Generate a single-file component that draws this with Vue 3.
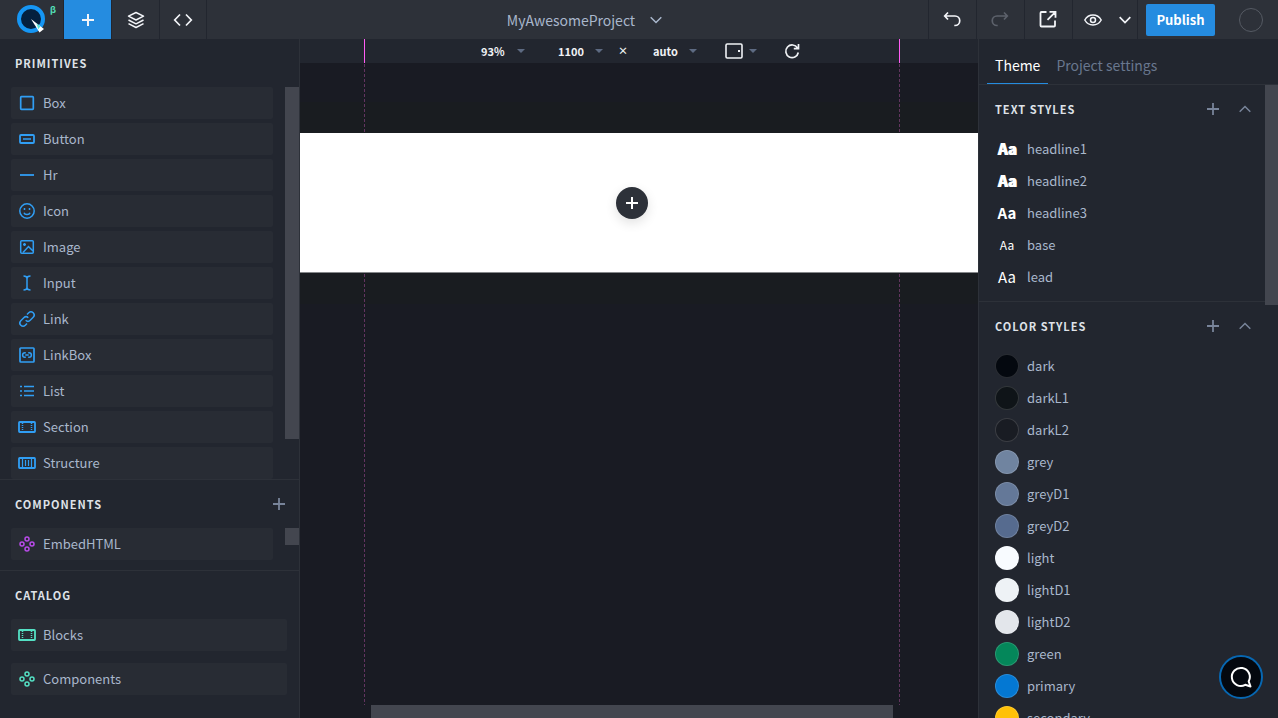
<script setup>
const primitives = [
  { name: 'Box', icon: 'box' },
  { name: 'Button', icon: 'button' },
  { name: 'Hr', icon: 'hr' },
  { name: 'Icon', icon: 'smile' },
  { name: 'Image', icon: 'image' },
  { name: 'Input', icon: 'input' },
  { name: 'Link', icon: 'link' },
  { name: 'LinkBox', icon: 'linkbox' },
  { name: 'List', icon: 'list' },
  { name: 'Section', icon: 'section' },
  { name: 'Structure', icon: 'structure' },
]

const catalog = [
  { name: 'Blocks', icon: 'section' },
  { name: 'Components', icon: 'component' },
]

const icons = {
  box: '<rect x="1.700" y="1.700" width="12.600" height="12.600" rx="0.7" stroke-width="1.700"/>',
  button: '<rect x="1" y="4" width="14" height="8" rx="1" stroke-width="1.800"/><path d="M4 8h8"/>',
  hr: '<path d="M1 8h14" stroke-width="1.800"/>',
  smile: '<circle cx="8" cy="8" r="7.2"/><path d="M5 9.8c.7 2.4 5.300 2.400 6 0M5.500 5v2M10.500 5v2"/>',
  image: '<rect x="1.700" y="1.700" width="12.600" height="12.600" rx="1"/><path d="M4 13.500l5.500-6 4.500 4.500M5.500 4v3M4 5.500h3"/>',
  input: '<path d="M8 3v10M4.500 1c2 0 3.500.7 3.500 2.500C8 1.700 9.500 1 11.500 1M4.500 15c2 0 3.500-.7 3.500-2.500 0 1.800 1.500 2.500 3.500 2.500"/>',
  link: '<path d="M6.700 9.300a3.200 3.200 0 0 0 4.500 0l3-3a3.180 3.180 0 0 0-4.500-4.500L8 3.500M9.300 6.700a3.200 3.200 0 0 0-4.500 0l-3 3a3.180 3.180 0 0 0 4.500 4.500L8 12.500"/>',
  linkbox: '<rect x="1" y="1" width="14" height="14" rx="0.8" stroke-width="1.700"/><path d="M6.800 5.700H5.900a2.300 2.300 0 0 0 0 4.600h.9M9.200 5.700h.9a2.300 2.300 0 0 1 0 4.600h-.9M6.300 8h3.400"/>',
  list: '<path d="M5 3.500h10M5 8h10M5 12.500h10M1 3.500h2M1 8h2M1 12.500h2" stroke-width="1.300"/>',
  section: '<rect x="0" y="3" width="16" height="10" rx="0.7" stroke-width="1.800"/><path d="M3.500 4v8M12.500 4v8" stroke-dasharray="1 1"/>',
  structure: '<rect x="0" y="3" width="16" height="10" rx="0.7" stroke-width="1.800"/><path d="M3.500 4v8M6.500 5v6M9.500 5v6M12.500 4v8" stroke-width="1.200"/>',
  component: '<circle cx="8" cy="3" r="2"/><circle cx="8" cy="13" r="2"/><circle cx="3" cy="8" r="2"/><circle cx="13" cy="8" r="2"/>',
}

const textStyles = [
  { name: 'headline1', cls: 'black' },
  { name: 'headline2', cls: 'black' },
  { name: 'headline3', cls: 'bold' },
  { name: 'base', cls: 'small' },
  { name: 'lead', cls: 'lead' },
]

const colors = [
  { name: 'dark', value: '#04080f' },
  { name: 'darkL1', value: '#0f1418' },
  { name: 'darkL2', value: '#191c23' },
  { name: 'grey', value: '#7084a0' },
  { name: 'greyD1', value: '#647898' },
  { name: 'greyD2', value: '#566b8f' },
  { name: 'light', value: '#f8fbff' },
  { name: 'lightD1', value: '#eef2f6' },
  { name: 'lightD2', value: '#e3e6eb' },
  { name: 'green', value: '#04875a' },
  { name: 'primary', value: '#0478d3' },
  { name: 'secondary', value: '#ffc107' },
]
</script>

<template>
  <div class="app">
    <header class="topbar">
      <a class="logo" href="#" aria-label="Home">
        <svg width="28" height="28" viewBox="0 0 28 28">
          <circle cx="14" cy="14" r="12" fill="#04203f" stroke="#1696f4" stroke-width="4" />
          <path d="M14 14L27 24l-4.500 3.500z" fill="#fff" />
          <path d="M19.500 18.500l4 2.800-2.200 3z" fill="#5ce6dc" />
        </svg>
        <span class="beta">β</span>
      </a>
      <button class="tool active" aria-label="Add">
        <svg width="24" height="24" viewBox="0 0 24 24"><path d="M12 6v12M6 12h12" stroke-width="2" /></svg>
      </button>
      <button class="tool" aria-label="Layers">
        <svg width="24" height="24" viewBox="0 0 24 24"><path d="M12 4.500l7.500 3.700-7.500 3.800-7.500-3.800zM4.500 12l7.500 3.800 7.500-3.800M4.500 15.700l7.500 3.800 7.500-3.800" stroke-linejoin="round" /></svg>
      </button>
      <button class="tool narrow" aria-label="Code">
        <svg width="24" height="24" viewBox="0 0 24 24"><path d="M9 6.500L3.700 12 9 17.500M15 6.500l5.300 5.500-5.300 5.500" stroke-width="1.700" /></svg>
      </button>
      <div class="project">
        <button class="project-name">
          MyAwesomeProject
          <svg width="12" height="12" viewBox="0 0 12 12"><path d="M.7 3.200L6 8.500l5.300-5.300" /></svg>
        </button>
      </div>
      <button class="tool edge" aria-label="Undo">
        <svg width="24" height="24" viewBox="1 0 24 24"><path d="M8 4.500L4.700 8 8 11.500M4.700 8H15a4.700 4.700 0 0 1 0 9.500h-.7" stroke-width="1.700" /></svg>
      </button>
      <button class="tool dim" aria-label="Redo">
        <svg width="24" height="24" viewBox="1 0 24 24"><path d="M16 4.500L19.300 8 16 11.500M19.300 8H9a4.700 4.700 0 0 0 0 9.500h.7" stroke-width="1.700" /></svg>
      </button>
      <button class="tool" aria-label="Open">
        <svg width="24" height="24" viewBox="1 1 24 24"><path d="M10.500 5H5.500a1 1 0 0 0-1 1v12.500a1 1 0 0 0 1 1H18a1 1 0 0 0 1-1V13.500M13.500 4.800h6v6M19.500 4.800l-8 8" stroke-width="1.800" /></svg>
      </button>
      <div class="preview">
        <button class="plain" aria-label="Preview">
          <svg width="18" height="18" viewBox="0 0 18 18"><path d="M.8 9C4.500 2.300 13.500 2.300 17.200 9 13.500 15.700 4.500 15.700.8 9z" /><circle cx="9" cy="9" r="2.500" /></svg>
        </button>
        <button class="plain" aria-label="Preview options">
          <svg width="12" height="12" viewBox="0 0 12 12"><path d="M.7 3.200L6 8.500l5.300-5.300" stroke-width="1.700" /></svg>
        </button>
      </div>
      <button class="publish">Publish</button>
      <button class="avatar" aria-label="Account"></button>
    </header>

    <div class="body">
      <aside class="left">
        <section class="primitives">
          <h2 class="head">Primitives</h2>
          <div class="scroller">
            <ul class="items">
              <li v-for="p in primitives" :key="p.name">
                <button class="item">
                  <svg width="16" height="16" viewBox="0 0 16 16" class="blue" v-html="icons[p.icon]" />
                  {{ p.name }}
                </button>
              </li>
            </ul>
            <div class="track"><div class="thumb tall"></div></div>
          </div>
        </section>
        <section class="ruled">
          <div class="head">
            <h2>Components</h2>
            <button class="plain grey" aria-label="Add component">
              <svg width="12" height="12" viewBox="0 0 12 12"><path d="M6 0v12M0 6h12" stroke-width="1.800" /></svg>
            </button>
          </div>
          <div class="scroller">
            <ul class="items padded">
              <li>
                <button class="item">
                  <svg width="16" height="16" viewBox="0 0 16 16" class="purple" v-html="icons.component" />
                  EmbedHTML
                </button>
              </li>
            </ul>
            <div class="track"><div class="thumb short"></div></div>
          </div>
        </section>
        <section class="ruled catalog">
          <h2 class="head">Catalog</h2>
          <ul class="items wide">
            <li v-for="c in catalog" :key="c.name">
              <button class="item">
                <svg width="16" height="16" viewBox="0 0 16 16" class="teal" v-html="icons[c.icon]" />
                {{ c.name }}
              </button>
            </li>
          </ul>
        </section>
      </aside>

      <main class="stage">
        <div class="ruler">
          <label class="pick zoom"><select aria-label="Zoom"><option>93%</option></select><i class="caret"></i></label>
          <label class="pick width"><select aria-label="Width"><option>1100</option></select><i class="caret"></i></label>
          <span class="times">×</span>
          <label class="pick height"><select aria-label="Height"><option>auto</option></select><i class="caret"></i></label>
          <button class="plain device" aria-label="Device">
            <svg width="18" height="16" viewBox="0 0 18 16"><rect x="1" y="1" width="16" height="14" rx="1.200" stroke-width="1.600" /><path d="M13 8h2" stroke-width="2" /></svg>
            <i class="caret"></i>
          </button>
          <button class="plain" aria-label="Reload">
            <svg width="16" height="16" viewBox="0 0 16 16"><path d="M13.500 5A6.300 6.300 0 1 0 14.300 9.500M14.500 1v4.700H9.800" stroke-width="1.700" /></svg>
          </button>
        </div>
        <div class="canvas">
          <div class="frame">
            <button class="insert" aria-label="Insert block">
              <svg width="12" height="12" viewBox="0 0 12 12"><path d="M6 0v12M0 6h12" stroke-width="2" /></svg>
            </button>
          </div>
        </div>
        <div class="guides"></div>
        <div class="hscroll"><div class="hthumb"></div></div>
      </main>

      <aside class="right">
        <nav class="tabs">
          <button class="tab on">Theme</button>
          <button class="tab">Project settings</button>
        </nav>
        <div class="scroller">
          <div class="panel">
            <section class="group">
              <div class="head">
                <h2>Text styles</h2>
                <button class="plain grey" aria-label="Add text style">
                  <svg width="12" height="12" viewBox="0 0 12 12"><path d="M6 0v12M0 6h12" stroke-width="1.800" /></svg>
                </button>
                <button class="plain grey" aria-label="Collapse text styles">
                  <svg width="12" height="12" viewBox="0 0 12 12"><path d="M.7 8.800L6 3.500l5.300 5.300" /></svg>
                </button>
              </div>
              <ul>
                <li v-for="t in textStyles" :key="t.name" class="row">
                  <span class="sample" :class="t.cls">Aa</span>{{ t.name }}
                </li>
              </ul>
            </section>
            <section class="group ruled">
              <div class="head">
                <h2>Color styles</h2>
                <button class="plain grey" aria-label="Add color style">
                  <svg width="12" height="12" viewBox="0 0 12 12"><path d="M6 0v12M0 6h12" stroke-width="1.800" /></svg>
                </button>
                <button class="plain grey" aria-label="Collapse color styles">
                  <svg width="12" height="12" viewBox="0 0 12 12"><path d="M.7 8.800L6 3.500l5.300 5.300" /></svg>
                </button>
              </div>
              <ul>
                <li v-for="c in colors" :key="c.name" class="row">
                  <span class="swatch" :style="{ background: c.value }"></span>{{ c.name }}
                </li>
              </ul>
            </section>
          </div>
          <div class="track"><div class="thumb theme"></div></div>
        </div>
      </aside>
    </div>

    <button class="chat" aria-label="Chat">
      <svg width="22" height="22" viewBox="0 0 22 22"><path d="M20.500 20.500l-1.800-5.200a9 9 0 1 0-3.500 3.500z" stroke-width="2" stroke-linejoin="round" /></svg>
    </button>
  </div>
</template>

<style>
body {
  background: #22262f;
  overflow: hidden;
}
</style>

<style scoped>
.app {
  height: 100vh;
  display: flex;
  flex-direction: column;
  background: #22262f;
  color: #a9b7cc;
  font: 400 13px/20px "Noto Sans CJK JP", "Noto Sans", sans-serif;
}
.app :deep(svg) {
  display: block;
  flex: none;
  fill: none;
  stroke: currentColor;
  stroke-width: 1.5;
  overflow: visible;
}
h2 {
  margin: 0;
  font: inherit;
}
ul {
  list-style: none;
  margin: 0;
  padding: 0;
}
button,
select {
  appearance: none;
  margin: 0;
  padding: 0;
  border: 0;
  background: none;
  color: inherit;
  font: inherit;
}

.topbar {
  display: flex;
  align-items: center;
  flex: none;
  height: 39px;
  background: #2d3139;
}
.logo {
  position: relative;
  display: flex;
  box-sizing: border-box;
  width: 64px;
  height: 39px;
  padding: 5px 0 0 17px;
  border-right: 1px solid #22262f;
  text-decoration: none;
}
.logo svg {
  stroke: none;
}
.beta {
  position: absolute;
  left: 50px;
  top: 0;
  color: #54e0b9;
  font-size: 9px;
  font-weight: 700;
}
.tool {
  display: flex;
  align-items: center;
  justify-content: center;
  box-sizing: border-box;
  width: 48px;
  height: 39px;
  border-right: 1px solid #22262f;
  color: #f3f5f9;
}
.tool.active {
  background: #258ce0;
}
.tool.narrow {
  width: 47px;
}
.tool.edge {
  width: 49px;
  border-left: 1px solid #22262f;
}
.tool.dim {
  color: #5c616b;
}
.project {
  flex: 1;
  display: flex;
  justify-content: center;
  padding-left: 34px;
}
.project-name {
  display: flex;
  align-items: center;
  gap: 15px;
  font-size: 14px;
}
.plain {
  display: flex;
  align-items: center;
}
.preview {
  display: flex;
  align-items: center;
  justify-content: space-between;
  box-sizing: border-box;
  width: 65px;
  height: 39px;
  padding: 0 6px 0 11px;
  border-right: 1px solid #22262f;
  color: #f3f5f9;
}
.publish {
  width: 69px;
  height: 32px;
  margin: 0 24px 0 8px;
  border-radius: 2px;
  background: #258ce0;
  color: #fff;
  font-weight: 700;
}
.avatar {
  box-sizing: border-box;
  width: 24px;
  height: 24px;
  margin-right: 15px;
  border: 1px solid #555a63;
  border-radius: 50%;
}

.body {
  flex: 1;
  min-height: 0;
  display: flex;
}
.left {
  display: flex;
  flex-direction: column;
  flex: none;
  box-sizing: border-box;
  width: 300px;
  border-right: 1px solid #2d3139;
}
.primitives {
  flex: 1;
  min-height: 0;
  display: flex;
  flex-direction: column;
}
.ruled {
  border-top: 1px solid #2d3139;
}
.catalog {
  padding-bottom: 23px;
}
.head {
  display: flex;
  align-items: center;
  flex: none;
  height: 48px;
  padding: 0 14px 0 15px;
  color: #dfe2e8;
  font-size: 11px;
  font-weight: 700;
  letter-spacing: 1px;
  text-transform: uppercase;
}
.head h2 {
  flex: 1;
}
.grey {
  color: #78849a;
}
.scroller {
  flex: 1;
  min-height: 0;
  display: flex;
  overflow: hidden;
}
.items {
  flex: 1;
  display: flex;
  flex-direction: column;
  gap: 4px;
  margin: 0 12px 0 11px;
}
.items.padded {
  padding-bottom: 10px;
}
.items.wide {
  gap: 12px;
}
.item {
  display: flex;
  align-items: center;
  gap: 8px;
  width: 100%;
  height: 32px;
  padding: 0 8px;
  border-radius: 2px;
  background: #282c34;
  text-align: left;
}
.blue {
  color: #309ef4;
}
.purple {
  color: #b84be8;
}
.teal {
  color: #54e0c4;
}
.track {
  flex: none;
  width: 14px;
}
.thumb {
  background: #43464f;
}
.tall {
  height: 352px;
}
.short {
  height: 17px;
}

.stage {
  position: relative;
  flex: 1;
  min-width: 0;
  display: flex;
  flex-direction: column;
  background: #191b23;
}
.ruler {
  display: flex;
  align-items: center;
  justify-content: center;
  flex: none;
  box-sizing: border-box;
  height: 24px;
  padding-left: 3px;
  color: #f0f2f5;
  background: #22262f;
  font-size: 11px;
}
.pick {
  display: flex;
  align-items: center;
  justify-content: space-between;
}
.pick select {
  font-weight: 700;
}
.zoom {
  width: 44px;
  margin-right: 33px;
}
.width {
  width: 45px;
}
.times {
  width: 40px;
  text-align: center;
  font-size: 10px;
  font-weight: 700;
}
.width + .times {
  margin-right: 10px;
}
.height {
  width: 44px;
  margin-right: 28px;
}
.device {
  gap: 6px;
  margin-right: 27px;
}
.caret {
  border: 4px solid transparent;
  border-top-color: #5d6a82;
  border-bottom: 0;
}
.canvas {
  flex: 1;
  padding-top: 39px;
}
.frame {
  display: flex;
  align-items: center;
  justify-content: center;
  box-sizing: border-box;
  height: 140px;
  margin-top: 31px;
  padding-right: 14px;
  background: #fff;
  border-bottom: 1px solid #85878a;
  box-shadow: 0 -31px #191c20, 0 31px #191c20;
}
.insert {
  display: flex;
  align-items: center;
  justify-content: center;
  width: 32px;
  height: 32px;
  border-radius: 50%;
  background: #2d3139;
  color: #fff;
  box-shadow: 0 4px 12px rgba(0, 0, 0, 0.12);
}
.guides {
  position: absolute;
  top: 0;
  bottom: 13px;
  left: 64px;
  right: 78px;
  pointer-events: none;
}
.guides::before,
.guides::after {
  content: "";
  position: absolute;
  top: 0;
  bottom: 0;
  width: 1px;
  background:
    linear-gradient(#ff5cf4, #ff5cf4) 0 0 / 1px 24px no-repeat,
    linear-gradient(transparent 94px, #fff 94px, #fff 233px, transparent 233px),
    repeating-linear-gradient(#633560 0 3px, transparent 3px 5px);
}
.guides::before {
  left: 0;
}
.guides::after {
  right: 0;
}
.hscroll {
  flex: none;
  height: 13px;
}
.hthumb {
  height: 100%;
  margin: 0 85px 0 71px;
  background: #43464f;
}

.right {
  display: flex;
  flex-direction: column;
  flex: none;
  box-sizing: border-box;
  width: 300px;
  border-left: 1px solid #2d3139;
}
.tabs {
  display: flex;
  flex: none;
  height: 45px;
  padding-left: 8px;
  border-bottom: 1px solid #2d3139;
}
.tab {
  padding: 8px 8px 0;
  border-bottom: 1px solid transparent;
  color: #69778e;
  font-size: 14px;
}
.tab.on {
  color: #fff;
  border-color: #258ce0;
}
.panel {
  flex: 1;
}
.group {
  padding-bottom: 8px;
}
.group .head {
  gap: 20px;
  padding: 0 14px 0 16px;
}
.row {
  display: flex;
  align-items: center;
  gap: 8px;
  height: 32px;
  padding-left: 16px;
}
.sample {
  width: 24px;
  color: #fff;
  text-align: center;
  font-size: 15px;
}
.black {
  font-weight: 900;
  text-shadow: 1px 0 #fff;
}
.bold {
  font-weight: 700;
}
.small {
  font-size: 12px;
}
.swatch {
  box-sizing: border-box;
  width: 24px;
  height: 24px;
  border: 1px solid rgba(255, 255, 255, 0.15);
  border-radius: 50%;
}
.right .track {
  width: 13px;
}
.theme {
  height: 220px;
}
.chat {
  position: fixed;
  right: 15px;
  bottom: 19px;
  display: flex;
  align-items: center;
  justify-content: center;
  box-sizing: border-box;
  width: 44px;
  height: 44px;
  border: 2px solid #0767b2;
  border-radius: 50%;
  background: #04080f;
  color: #fff;
}
</style>
